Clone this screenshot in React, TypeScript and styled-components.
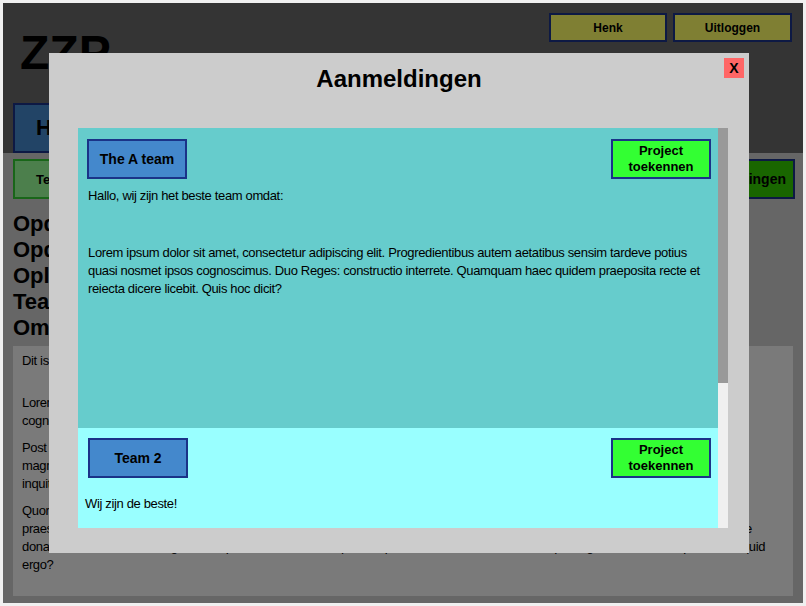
import styled, { createGlobalStyle } from "styled-components";

const GlobalStyle = createGlobalStyle`
  html, body {
    margin: 0;
    padding: 0;
  }
  body {
    background: #f0f0f0;
    padding: 3px;
    font-family: "Liberation Sans", Arial, sans-serif;
    font-size: 13px;
    letter-spacing: -0.35px;
    color: #000;
  }
`;

const Page = styled.div`
  position: relative;
  width: 800px;
  height: 600px;
  background: #cccccc;
  overflow: hidden;
`;

const Header = styled.header`
  height: 150px;
  background: #686868;
  display: flex;
  flex-direction: column;
`;

const TopRow = styled.div`
  display: flex;
  justify-content: space-between;
  align-items: flex-start;
  padding: 10px 11px 0 17px;
`;

const Logo = styled.h1`
  margin: 12px 0 0;
  font-size: 48px;
  line-height: 55px;
  font-weight: bold;
  letter-spacing: 0;
`;

const UserMenu = styled.div`
  display: flex;
  gap: 6px;
`;

const UserButton = styled.button<{ $width: number }>`
  width: ${(p) => p.$width}px;
  height: 29px;
  padding: 0;
  background: #ffff66;
  border: 2px solid #1a3388;
  font: bold 12px "Liberation Sans", Arial, sans-serif;
  color: #000;
`;

const NavRow = styled.nav`
  margin-top: auto;
  display: flex;
  padding-left: 10px;
`;

const NavButton = styled.button`
  height: 50px;
  padding: 0 21px;
  background: #4488cc;
  border: 2px solid #1a3388;
  font: bold 22px "Liberation Sans", Arial, sans-serif;
  color: #000;
`;

const SubNav = styled.div`
  display: flex;
  gap: 8px;
  padding: 6px 8px 0 10px;
`;

const TabButton = styled.button<{ $active?: boolean }>`
  height: 40px;
  padding: 0 ${(p) => (p.$active ? 7 : 21)}px;
  background: ${(p) => (p.$active ? "#33cc00" : "#99ff99")};
  border: 2px solid ${(p) => (p.$active ? "#1a3388" : "#33cc33")};
  font: bold ${(p) => (p.$active ? 14 : 13)}px "Liberation Sans", Arial, sans-serif;
  color: #000;
  &:last-child {
    margin-left: auto;
  }
`;

const Headings = styled.div`
  margin: 12px 0 0;
  padding-left: 10px;
`;

const Heading = styled.h2`
  margin: 0;
  font-size: 22px;
  line-height: 26px;
  font-weight: bold;
  letter-spacing: 0;
`;

const ContentBox = styled.section`
  margin: 5px 10px 0;
  height: 250px;
  box-sizing: border-box;
  padding: 6px 9px 0;
  background: #f4f4f4;
`;

const Paragraph = styled.p<{ $gap?: number }>`
  margin: 0 0 ${(p) => p.$gap ?? 9}px;
  line-height: 18px;
  white-space: nowrap;
`;

const Overlay = styled.div`
  position: absolute;
  inset: 0;
  background: rgba(0, 0, 0, 0.5);
`;

const Modal = styled.div`
  position: absolute;
  left: 46px;
  top: 50px;
  width: 700px;
  height: 500px;
  box-sizing: border-box;
  padding-top: 12px;
  background: #cccccc;
`;

const ModalTitle = styled.h2`
  margin: 0;
  text-align: center;
  font-size: 24px;
  line-height: 28px;
  font-weight: bold;
  letter-spacing: 0;
`;

const CloseButton = styled.button`
  position: absolute;
  top: 5px;
  right: 5px;
  width: 20px;
  height: 20px;
  padding: 0;
  border: none;
  background: #ff6666;
  font: bold 14px "Liberation Sans", Arial, sans-serif;
  color: #000;
`;

const TeamList = styled.div`
  display: flex;
  width: 650px;
  height: 400px;
  margin: 35px 0 0 29px;
`;

const Cards = styled.div`
  flex: 1;
  overflow: hidden;
`;

const ScrollTrack = styled.div`
  width: 10px;
  background: #f0f0f0;
`;

const ScrollThumb = styled.div`
  height: 255px;
  background: #999999;
`;

const Card = styled.div<{ $bg: string; $height: number; $top: number }>`
  height: ${(p) => p.$height}px;
  box-sizing: border-box;
  padding: ${(p) => p.$top}px 7px 0 9px;
  background: ${(p) => p.$bg};
`;

const CardTop = styled.div<{ $indent: number }>`
  display: flex;
  justify-content: space-between;
  align-items: flex-start;
  padding-left: ${(p) => p.$indent}px;
`;

const TeamButton = styled.button`
  width: 100px;
  height: 40px;
  padding: 0;
  background: #4488cc;
  border: 2px solid #1a3388;
  font: bold 14px "Liberation Sans", Arial, sans-serif;
  color: #000;
`;

const AssignButton = styled.button`
  width: 100px;
  height: 40px;
  padding: 0;
  background: #33ff33;
  border: 2px solid #1a3388;
  font: bold 13px "Liberation Sans", Arial, sans-serif;
  line-height: 16px;
  color: #000;
`;

const CardText = styled.p<{ $top: number; $indent: number }>`
  margin: ${(p) => p.$top}px 0 0 ${(p) => p.$indent}px;
  line-height: 18px;
`;

const teams = [
  {
    name: "The A team",
    bg: "#66cccc",
    height: 300,
    top: 11,
    indent: 0,
    texts: [
      { top: 8, indent: 1, body: "Hallo, wij zijn het beste team omdat:" },
      {
        top: 39,
        indent: 1,
        body: "Lorem ipsum dolor sit amet, consectetur adipiscing elit. Progredientibus autem aetatibus sensim tardeve potius quasi nosmet ipsos cognoscimus. Duo Reges: constructio interrete. Quamquam haec quidem praeposita recte et reiecta dicere licebit. Quis hoc dicit?",
      },
    ],
  },
  {
    name: "Team 2",
    bg: "#99ffff",
    height: 327,
    top: 10,
    indent: 1,
    texts: [{ top: 17, indent: -2, body: "Wij zijn de beste!" }],
  },
];

const description = [
  [
    "Lorem ipsum dolor sit amet, consectetur adipiscing elit. Progredientibus autem aetatibus sensim tardeve potius quasi nosmet ipsos",
    "cognoscimus. Duo Reges: constructio interrete. Quamquam haec quidem praeposita recte et reiecta dicere licebit.",
  ],
  [
    "Post enim Chrysippum eum non sane est disputatum. Nam quid possumus facere melius? Ut pulsi recurrant? Quae cum dixisset",
    "magnum, inquit, est; Quid ergo hoc loco intellegit honestum? Sed ad haec, nisi molestum est, habeo quae velim. Tamen illi quidem sic,",
    "inquit, quid est?",
  ],
  [
    "Quorum sine causa fieri nihil putandum est. Ita prorsus, inquam; Non igitur bene. Quae similitudo in genere etiam apparet.",
    "praesertim cum omnia quae dicimus et sentimus ad virtutem referimus, scio te non ignorare quid ego putem de summo bono tibi dicere",
    "donare, sed nimis multa. Ergo in utroque exercebantur, eaque disciplina effecit tantam illorum utroque in genere dicendi copiam. Sed quid",
    "ergo?",
  ],
];

function App() {
  return (
    <>
      <GlobalStyle />
      <Page>
        <Header>
          <TopRow>
            <Logo>ZZP</Logo>
            <UserMenu>
              <UserButton $width={118}>Henk</UserButton>
              <UserButton $width={119}>Uitloggen</UserButton>
            </UserMenu>
          </TopRow>
          <NavRow>
            <NavButton>Home</NavButton>
          </NavRow>
        </Header>

        <SubNav>
          <TabButton>Teams</TabButton>
          <TabButton>Projecten</TabButton>
          <TabButton $active>Aanmeldingen</TabButton>
        </SubNav>

        <Headings>
          <Heading>Opdrachtgever: Henk</Heading>
          <Heading>Opdracht: Website</Heading>
          <Heading>Opleverdatum: 01-06-2016</Heading>
          <Heading>Team: nog geen</Heading>
          <Heading>Omschrijving</Heading>
        </Headings>

        <ContentBox>
          <Paragraph $gap={24}>Dit is een beschrijving van het project.</Paragraph>
          {description.map((lines, i) => (
            <Paragraph key={i}>
              {lines.map((line, j) => (
                <span key={j}>
                  {j > 0 && <br />}
                  {line}
                </span>
              ))}
            </Paragraph>
          ))}
        </ContentBox>

        <Overlay />

        <Modal>
          <ModalTitle>Aanmeldingen</ModalTitle>
          <CloseButton>X</CloseButton>
          <TeamList>
            <Cards>
              {teams.map((team) => (
                <Card key={team.name} $bg={team.bg} $height={team.height} $top={team.top}>
                  <CardTop $indent={team.indent}>
                    <TeamButton>{team.name}</TeamButton>
                    <AssignButton>
                      Project
                      <br />
                      toekennen
                    </AssignButton>
                  </CardTop>
                  {team.texts.map((t, i) => (
                    <CardText key={i} $top={t.top} $indent={t.indent}>
                      {t.body}
                    </CardText>
                  ))}
                </Card>
              ))}
            </Cards>
            <ScrollTrack>
              <ScrollThumb />
            </ScrollTrack>
          </TeamList>
        </Modal>
      </Page>
    </>
  );
}

export default App;
